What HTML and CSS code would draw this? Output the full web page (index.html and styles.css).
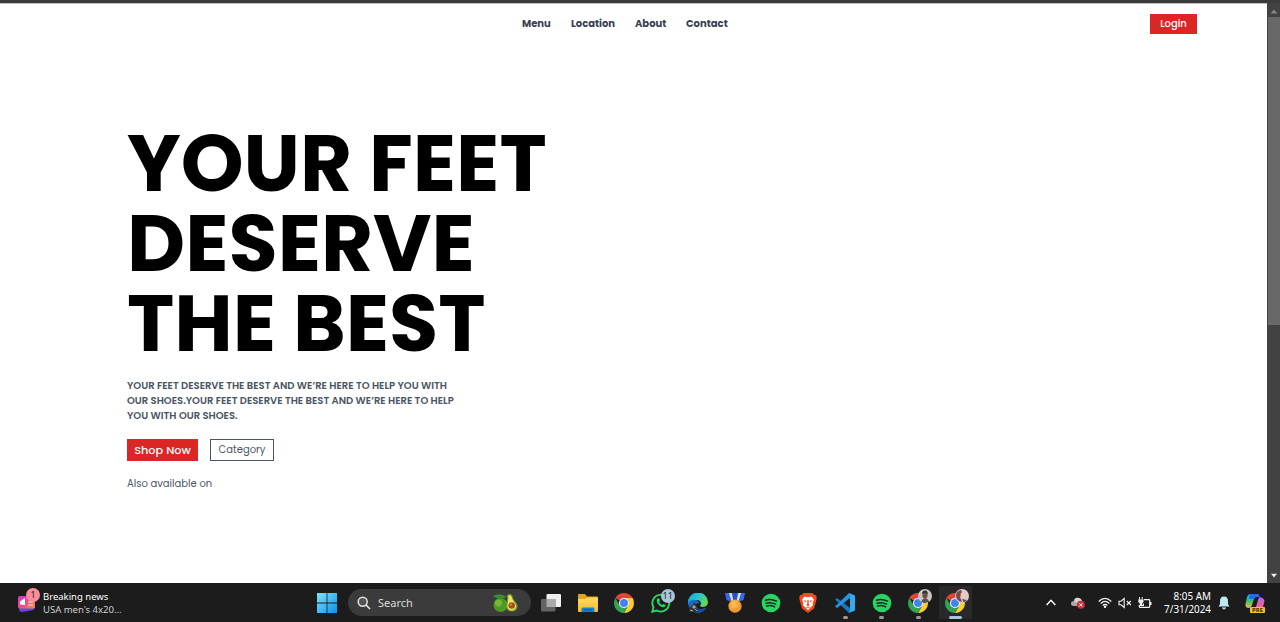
FILE: index.html
```
<!DOCTYPE html>
<html lang="en">
<head>
<meta charset="utf-8">
<title>Shoe store</title>
<link rel="stylesheet" href="styles.css">
</head>
<body>
<svg class="defs" aria-hidden="true">
  <defs>
    <linearGradient id="win" x1="0" y1="0" x2="1" y2="1"><stop offset="0" stop-color="#7fe4fb"/><stop offset="1" stop-color="#0a8ff0"/></linearGradient>
    <linearGradient id="fold" x1="0" y1="0" x2="0" y2="1"><stop offset="0" stop-color="#ffdc62"/><stop offset="1" stop-color="#f8b92c"/></linearGradient>
    <linearGradient id="edge" x1="0" y1="0" x2="1" y2=".5"><stop offset="0" stop-color="#1b9de2"/><stop offset=".5" stop-color="#29c3d2"/><stop offset="1" stop-color="#62d957"/></linearGradient>
    <linearGradient id="news" x1="0" y1="0" x2="1" y2="1"><stop offset="0" stop-color="#c23bd6"/><stop offset=".5" stop-color="#ee4a86"/><stop offset="1" stop-color="#fd8a3c"/></linearGradient>
    <linearGradient id="pilotA" x1="0" y1="0" x2="0" y2="1"><stop offset="0" stop-color="#1c9cf2"/><stop offset=".5" stop-color="#35bd84"/><stop offset="1" stop-color="#f4c322"/></linearGradient>
    <linearGradient id="pilotB" x1="0" y1="0" x2="0" y2="1"><stop offset="0" stop-color="#a66bf0"/><stop offset=".6" stop-color="#ed5f98"/><stop offset="1" stop-color="#fb9a55"/></linearGradient>
    <radialGradient id="gold" cx=".4" cy=".35"><stop offset="0" stop-color="#ffc55c"/><stop offset="1" stop-color="#f0962c"/></radialGradient>
    <symbol id="chrome" viewBox="0 0 20 20">
      <path d="M1.34 5A10 10 0 0 1 18.66 5L10 5.1 5.7 7.6z" fill="#e04436"/>
      <path d="M18.66 5A10 10 0 0 1 10 20L14.3 12.5 14.3 7.5 10 5z" fill="#fccb2d"/>
      <path d="M1.34 5A10 10 0 0 0 10 20L14.3 12.5 10 14.9 5.7 12.5z" fill="#31a552"/>
      <circle cx="10" cy="10" r="5.1" fill="#fff"/><circle cx="10" cy="10" r="4" fill="#3f83ee"/>
    </symbol>
    <symbol id="spotify" viewBox="0 0 20 20">
      <circle cx="10" cy="10" r="9.3" fill="#26d563"/>
      <path d="M4.500 7.200Q10 5.500 15.500 8.200M5 10.200Q10 8.800 14.600 11.200M5.600 13Q10 11.900 13.600 13.900" fill="none" stroke="#15291c" stroke-width="1.500" stroke-linecap="round"/>
    </symbol>
  </defs>
</svg>

<div class="browser">
  <main class="page">
    <nav class="nav">
      <ul class="links">
        <li class="link menu">Menu</li>
        <li class="link location">Location</li>
        <li class="link about">About</li>
        <li class="link contact">Contact</li>
      </ul>
      <button class="login">Login</button>
    </nav>
    <section class="hero">
      <h1 class="title"><span class="line">YOUR FEET</span><span class="line">DESERVE</span><span class="line">THE BEST</span></h1>
      <p class="copy"><span class="line">YOUR FEET DESERVE THE BEST AND WE’RE HERE TO HELP YOU WITH</span><span class="line">OUR SHOES.YOUR FEET DESERVE THE BEST AND WE’RE HERE TO HELP</span><span class="line">YOU WITH OUR SHOES.</span></p>
      <div class="actions">
        <button class="shop">Shop Now</button>
        <button class="category">Category</button>
      </div>
      <p class="also">Also available on</p>
    </section>
  </main>
  <div class="scrollbar">
    <svg class="arrow up" viewBox="0 0 8 5"><path d="M4 .5L7.5 4.5H.5z" fill="#858585"/></svg>
    <div class="thumb"></div>
    <svg class="arrow" viewBox="0 0 8 5"><path d="M4 4.5L7 .8H1z" fill="#eee"/></svg>
  </div>
</div>

<footer class="taskbar">
  <div class="widget">
    <div class="news-icon">
      <svg width="20" height="20" viewBox="0 0 20 20"><path d="M2 14L18 11V15Q17 17 14 17.500L5 19Q3 19 2 17z" fill="#6746da"/><rect x="1" y="3" width="17" height="12.500" rx="2" fill="url(#news)"/><path d="M3 11.500V8.500L8 5V12z" fill="#fff"/><path d="M11 9h5M11 12h5" stroke="#ffd0b8" stroke-width="1.400"/></svg>
      <span class="news-badge">1</span>
    </div>
    <div class="news-text"><span class="headline">Breaking news</span><span class="sub">USA men's 4x20...</span></div>
  </div>
  <div class="center">
    <svg class="start" viewBox="0 0 20 20"><path d="M0 0h9.600v9.600H0zM10.400 0H20v9.600h-9.600zM0 10.400h9.600V20H0zM10.400 10.400H20V20h-9.600z" fill="url(#win)"/></svg>
    <div class="search">
      <svg class="lens" viewBox="0 0 14 14"><circle cx="5.700" cy="5.700" r="4.500" fill="#555" stroke="#e4e4e4" stroke-width="1.500"/><path d="M9 9l4 4" stroke="#e4e4e4" stroke-width="1.700"/></svg>
      <span class="search-label">Search</span>
      <svg class="avocado" viewBox="0 0 26 20"><ellipse cx="7.500" cy="12" rx="7" ry="7" fill="#4c9a25"/><ellipse cx="5.500" cy="10" rx="3.500" ry="3.500" fill="#76b835"/><path d="M0 3Q7-1 14 4 6 8 0 3z" fill="#3e8b34"/><path d="M14 2Q19-1 20 5C21 8 25 10 24.500 14 24 20 14 20 13 14 12.500 10 15 8 14 2z" fill="#6e9e22"/><path d="M15 3Q18 1 19 5C20 9 23.500 10 23 14 22 18.500 15 18.500 14.500 14 14 9 16 8 15 3z" fill="#f3df68"/><circle cx="18.700" cy="12.500" r="3.300" fill="#a65220"/><circle cx="18" cy="11.500" r="1" fill="#d9905a"/></svg>
    </div>
    <div class="apps">
      <div class="app"><svg class="icon" viewBox="0 0 20 20"><rect x="5.500" y="1" width="14.500" height="13" rx="1" fill="#efefef"/><rect x="0" y="6" width="14.500" height="12.500" rx="1" fill="#636363"/><path d="M5.500 6h9v8h-9z" fill="#aaa"/></svg></div>
      <div class="app"><svg class="icon" viewBox="0 0 20 20"><path d="M0 2Q0 1 1 1H7L9 3.500H19Q20 3.500 20 4.500V8H0z" fill="#e2a321"/><path d="M0 6H7L9 4.500H19Q20 4.500 20 5.500V18Q20 19 19 19H1Q0 19 0 18z" fill="url(#fold)"/><path d="M3.500 19V16Q3.500 14.500 5 14.500H15Q16.500 14.500 16.500 16V19z" fill="#1680cf"/><path d="M6 17h8" stroke="#0a599d"/></svg></div>
      <div class="app"><svg class="icon"><use href="#chrome"/></svg></div>
      <div class="app"><svg class="icon" viewBox="0 0 20 20"><path d="M1.300 18.700L2.500 14.300A8.400 8.400 0 1 1 5.800 17.500z" fill="#1d1d1d" stroke="#2bd463" stroke-width="1.900"/><path d="M6.600 5.300L8.300 5.600 9 7.800 8 9Q9 11 11.200 12L12.500 11 14.700 12Q14.500 14.300 12.500 14.300 8.500 14 6 9.500 5 7 6.600 5.300z" fill="#2bd463"/></svg><span class="count">11</span></div>
      <div class="app"><svg class="icon" viewBox="0 0 20 20"><path d="M0 10A10 10 0 0 1 20 9Q20 14 14 14 11 13.500 13 11 13 7 8.500 7 3 7 0 12z" fill="url(#edge)"/><path d="M0 10Q3 6 8 7 11 8 11.500 11 8 9 7.500 13 9 18 18 15 15 20 9.500 20 1 19 0 10z" fill="#176bc3"/><path d="M8 13Q10 18 18 15 15 20 9.500 20 6 17 8 13z" fill="#134c9b"/><path d="M1 19L2 14 5 12 6 9.500 9 12 8 15 10 19z" fill="#303238"/><path d="M4 14l2-2 2 2-2 2z" fill="#c79b87"/><path d="M2 17l3 1M7 16l2 2" stroke="#a6b6c0"/></svg></div>
      <div class="app"><svg class="icon" viewBox="0 0 20 20"><path d="M0 0H20L18.500 7 13 9H7L1.500 7z" fill="#386ae0"/><path d="M4 0h2.500l2 8H6.500zM16 0h-2.500l-2 8h2z" fill="#dce7ff"/><path d="M8 0h4v8H8z" fill="#2852c6"/><circle cx="10" cy="13.200" r="6.600" fill="url(#gold)"/></svg></div>
      <div class="app"><svg class="icon"><use href="#spotify"/></svg></div>
      <div class="app"><svg class="icon" viewBox="0 0 20 20"><path d="M5.500 0H14.500L16.500 2 18 2 18.800 5 18 8.500 16 15.500 10 20 4 15.500 2 8.500 1.200 5 2 2 3.500 2z" fill="#f14a22"/><path d="M6.500 3.500L10 4.300 13.500 3.500 16 6.500 14.500 10 15 12 10 17 5 12 5.500 10 4 6.500z" fill="#fff"/><path d="M5.500 7L8.500 8 7.500 9.200zM14.500 7L11.500 8 12.500 9.200zM9.300 7h1.400v4l1.300 1-2 1.300L8 12l1.300-1zM7.500 14L10 13.800 12.500 14 10 15z" fill="#f14a22"/></svg></div>
      <div class="app"><svg class="icon" viewBox="0 0 20 20"><path d="M0 6.500L2 5 15 15V19.500L14 20z" fill="#1479c4"/><path d="M0 13.500L2 15 15 5V.500L14 0z" fill="#2496e0"/><path d="M14 0L20 2.500V17.500L14 20 15 18V2z" fill="#36a8ec"/></svg><i class="dot"></i></div>
      <div class="app"><svg class="icon"><use href="#spotify"/></svg><i class="dot"></i></div>
      <div class="app"><svg class="icon"><use href="#chrome"/></svg><svg class="avatar" viewBox="0 0 14 14"><circle cx="7" cy="7" r="7" fill="#c9c6c4"/><path d="M3.500 13Q4 9.500 7 9.500T11 12.500Q7 15 3.500 13z" fill="#555057"/><ellipse cx="7" cy="6" rx="2.600" ry="3.800" fill="#6a514a"/><path d="M4.300 5Q4 1.500 7 1.500T9.700 5L7 3.500z" fill="#302b2c"/></svg><i class="dot"></i></div>
      <div class="app active"><svg class="icon"><use href="#chrome"/></svg><svg class="avatar" viewBox="0 0 14 14"><circle cx="7" cy="7" r="7" fill="#d8cecb"/><path d="M1 6Q1 2 6 1L8 5 5 8 7 13Q1 12 1 6z" fill="#784650"/><ellipse cx="8" cy="6" rx="2.500" ry="3" fill="#efc9b8"/><path d="M7 10l5 1-3 2.500z" fill="#6b3f4b"/></svg><i class="dot wide"></i></div>
    </div>
  </div>
  <div class="tray">
    <svg class="chev" viewBox="0 0 10 7"><path d="M.6 5.900L5 1.300 9.400 5.900" fill="none" stroke="#fff" stroke-width="1.400"/></svg>
    <svg class="cloud" viewBox="0 0 14 12"><path d="M3 9Q0 9 0 6.500T3 4Q4 0 7.500 1T11 4.500Q13 5 13 8L10 9z" fill="#aaa"/><path d="M3 4Q4 0 7.500 1T11 4.500L6 6z" fill="#d5d5d5"/><circle cx="9.800" cy="7.800" r="4" fill="#d52b3c"/><path d="M8.200 6.200l3.200 3.200M11.400 6.200L8.200 9.400" stroke="#fff"/></svg>
    <svg class="wifi" viewBox="0 0 14 12"><g fill="none" stroke="#f4f4f4" stroke-width="1.200"><path d="M.7 4.500Q7-1.800 13.300 4.500M2.700 6.500Q7 2.200 11.300 6.500M4.700 8.500Q7 6.200 9.300 8.500"/></g><circle cx="7" cy="9.800" r="1.200" fill="#fff"/></svg>
    <svg class="sound" viewBox="0 0 14 12"><path d="M1 4.200h2L6.200 1.500v9L3 7.800H1z" fill="none" stroke="#f4f4f4" stroke-width="1.100"/><path d="M8.800 4l4 4M12.800 4l-4 4" stroke="#eee" stroke-width="1.100"/></svg>
    <svg class="battery" viewBox="0 0 14 12"><path d="M6 2.700h5q.7 0 .7.700v6.200q0 .7-.7.700H2q-.7 0-.7-.7V8" fill="none" stroke="#f4f4f4" stroke-width="1.200"/><path d="M12 5h1.500v3H12z" fill="#eee"/><path d="M1.500 0v2.500M4 0v2.500M.3 2.500H5.500V5L4 6.800V8.300L6 6V9H1.800V6.500L.3 5z" fill="#eee"/><path d="M1.500 0v3M4.200 0v3" stroke="#eee"/></svg>
    <div class="clock"><span class="time">8:05 AM</span><span class="date">7/31/2024</span></div>
    <svg class="bell" viewBox="0 0 12 14"><path d="M6 .5Q10 .5 10 5V8L11.500 10.500H.5L2 8V5Q2 .5 6 .5zM4 11.500H8Q7.500 13.500 6 13.500T4 11.500z" fill="#bfe8f2"/></svg>
    <div class="copilot">
      <svg width="20" height="19" viewBox="0 0 20 19"><path d="M5 1H12Q14 1 14.500 4H11Q9.500 4 9 6L7 12Q6 15 3 15 0 14 .5 11L2 4Q3 1 5 1z" fill="url(#pilotA)"/><path d="M5 1H12Q14 1 14.500 4H11Q9.500 4 9 6H4z" fill="#1b6fe0"/><path d="M15 4Q19 5 19.500 8L18 14Q17 18 14 18H7Q10 17 11 14L13 7Q14 4 15 4z" fill="url(#pilotB)"/></svg>
      <span class="pre">PRE</span>
    </div>
  </div>
</footer>
</body>
</html>
```
FILE: styles.css
```
* { box-sizing: border-box; }
body { margin: 0; width: 1280px; height: 622px; overflow: hidden; display: flex; flex-direction: column; background: #fff; font-family: Poppins, Inter, sans-serif; }
.defs { position: absolute; width: 0; height: 0; }
button { font-family: inherit; padding: 0; border: 0; border-radius: 0; white-space: nowrap; }
.line { display: block; white-space: nowrap; width: max-content; }

.browser { height: 583px; flex: none; display: flex; border-top: 3px solid #3c3c3c; }
.page { flex: 1; border-top: 1px solid #bdbdbd; }
.nav { height: 39px; display: grid; grid-template-columns: 1fr auto 1fr; align-items: center; padding: 0 70px 0 53px; }
.links { grid-column: 2; display: flex; gap: 20px; list-style: none; margin: 0; padding: 0; }
.link { font-size: 10px; font-weight: 700; line-height: 16px; color: #374151; white-space: nowrap; }
.menu { width: 29px; }
.location { width: 44px; }
.about { width: 31px; }
.contact { width: 42px; }
.login { justify-self: end; width: 47px; height: 20px; background: #dc2626; color: #fff; font-size: 10px; font-weight: 500; }

.hero { padding: 80px 0 0 127px; }
.title { margin: 0; font-size: 80px; line-height: 80px; font-weight: 700; color: #000; }
.copy { margin: 15px 0 0; font-size: 10px; line-height: 15px; font-weight: 600; color: #4b5563; }
.actions { display: flex; gap: 12px; margin-top: 16px; }
.shop { width: 71px; height: 22px; background: #dc2626; color: #fff; font-size: 11.3px; font-weight: 500; }
.category { width: 64px; height: 22px; border: 1px solid #4b5563; background: #fff; color: #4b5563; font-size: 10px; }
.also { margin: 14px 0 0; font-size: 10px; line-height: 17px; color: #4b5563; }

.scrollbar { width: 13px; background: #424242; display: flex; flex-direction: column; align-items: center; padding: 6px 0 5px; }
.arrow { width: 8px; height: 5px; flex: none; margin-top: auto; }
.up { margin: 0; }
.thumb { width: 12px; height: 308px; margin: 3px 0 0 1px; background: #686868; }

.taskbar { height: 39px; background: #1c1c1c; color: #fff; display: flex; font-family: "Segoe UI", "Noto Sans", sans-serif; }
.widget { width: 316.5px; display: flex; padding: 6px 0 0 17px; }
.news-icon { position: relative; width: 26px; height: 26px; padding-top: 4px; }
.news-badge { position: absolute; left: 9px; top: -1px; width: 14px; height: 14px; border-radius: 50%; background: #fa8d98; color: #331a1d; font-size: 9px; line-height: 14px; text-align: center; }
.news-text { display: flex; flex-direction: column; font-size: 9.5px; line-height: 13px; padding-top: 1px; white-space: nowrap; }
.sub { color: #d0d0d0; }
.center { display: flex; align-items: center; }
.start { width: 20px; height: 20px; margin: 0 11.5px 0 0; }
.search { width: 183px; height: 27px; border-radius: 14px; background: #3b3b3b; display: flex; align-items: center; padding: 0 12px 0 9px; }
.lens { width: 14px; height: 14px; }
.search-label { margin-left: 7px; font-size: 11px; color: #ddd; }
.avocado { width: 26px; height: 20px; margin-left: auto; }
.apps { display: grid; grid-template-columns: repeat(12, 36.75px); margin-left: 1.5px; height: 39px; }
.app { position: relative; display: flex; align-items: center; justify-content: center; }
.icon { width: 20px; height: 20px; }
.active { background: linear-gradient(#292929, #292929) center / 33px 33px no-repeat; }
.dot { position: absolute; left: 16px; bottom: 3px; width: 5px; height: 3px; border-radius: 2px; background: #9b9b9b; }
.wide { left: 12px; width: 13px; background: #a6c8df; }
.count { position: absolute; left: 18px; top: 6px; width: 14px; height: 14px; border-radius: 7px; background: #a9c6d8; color: #17252d; font-size: 9px; line-height: 14px; text-align: center; }
.avatar { position: absolute; left: 18px; top: 6px; width: 14px; height: 14px; }
.tray { margin-left: auto; display: flex; align-items: center; padding-right: 15px; }
.chev { width: 10px; height: 7px; margin-right: 15px; }
.cloud { width: 14px; height: 12px; margin-right: 13px; }
.wifi { width: 14px; height: 12px; margin-right: 6px; }
.sound { width: 14px; height: 12px; margin-right: 6px; }
.battery { width: 14px; height: 12px; }
.clock { width: 59px; display: flex; flex-direction: column; align-items: flex-end; font-size: 9.9px; line-height: 13px; white-space: nowrap; }
.bell { width: 12px; height: 14px; margin: 0 15px 0 7px; }
.copilot { position: relative; width: 20px; height: 19px; }
.pre { position: absolute; left: 5px; bottom: -1px; width: 15px; height: 6px; border-radius: 1px; background: #f8c02b; color: #362b0c; font-size: 6px; font-weight: 700; line-height: 6px; text-align: center; }
```
